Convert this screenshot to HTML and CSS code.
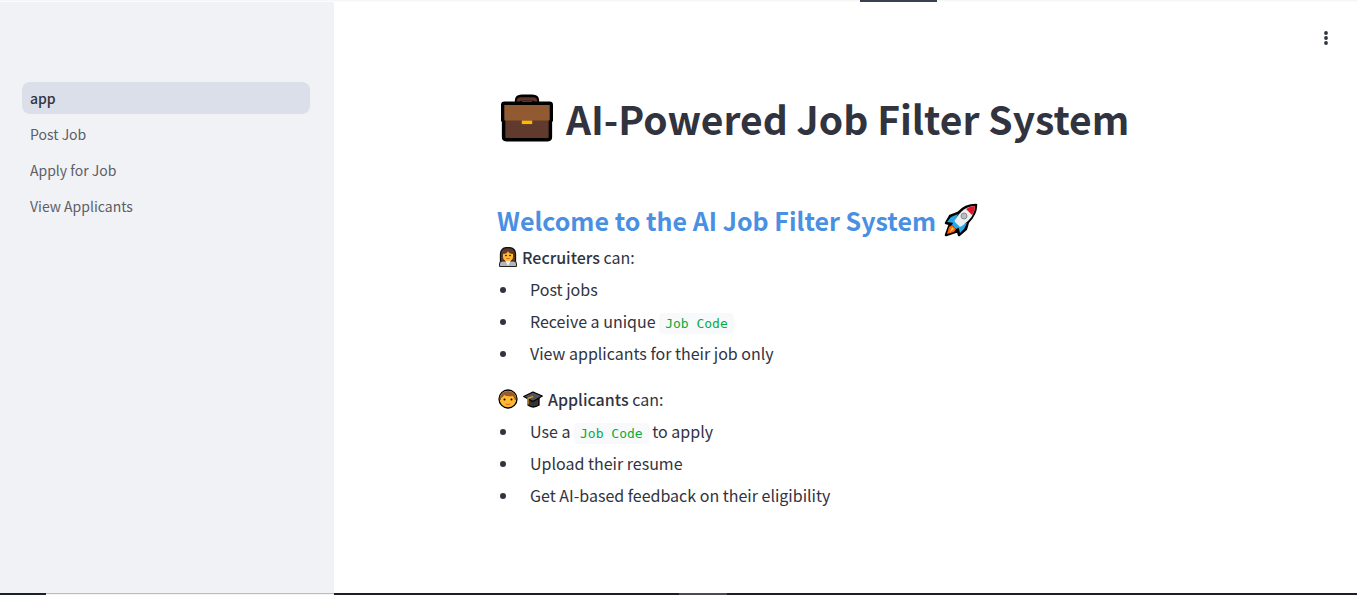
FILE: index.html
```html
<!DOCTYPE html>
<html lang="en">
<head>
<meta charset="utf-8">
<meta name="viewport" content="width=device-width, initial-scale=1">
<title>AI-Powered Job Filter System</title>
<link rel="stylesheet" href="styles.css">
</head>
<body>
<div class="page">
  <div class="strip strip-top"><span class="strip-tab"></span></div>
  <div class="layout">
    <nav class="sidebar" aria-label="Pages">
      <a class="nav-link active" href="#app" aria-current="page">app</a>
      <a class="nav-link" href="#post">Post Job</a>
      <a class="nav-link" href="#apply">Apply for Job</a>
      <a class="nav-link" href="#view">View Applicants</a>
    </nav>
    <main class="main">
      <button class="menu" type="button" aria-label="Main menu">
        <svg width="16" height="16" viewBox="0 0 16 16" fill="currentColor"><circle cx="8" cy="3" r="1.900"/><circle cx="8" cy="8" r="1.900"/><circle cx="8" cy="13" r="1.900"/></svg>
      </button>
      <div class="content">
        <h1 class="title">
          <svg class="emoji-title" viewBox="0 -2 60 60" aria-hidden="true">
            <path d="M20 14V8q0-3 4-3h12q4 0 4 3v6" fill="none" stroke="#000" stroke-width="8"/>
            <path d="M20 14V9q0-3 3-3h14q3 0 3 3v5" fill="none" stroke="#603629" stroke-width="4"/>
            <path d="M4 11h52q2 0 2 2v18h-1v19q0 3-3 3H6q-3 0-3-3V31H2V13q0-2 2-2z" fill="#603a2d" stroke="#000" stroke-width="4" stroke-linejoin="round"/>
            <path d="M4 13h52v18H4z" fill="#925a30"/>
            <path d="M24 31h12v4H24z" fill="#ffb900"/>
          </svg>
          <span>AI-Powered Job Filter System</span>
        </h1>
        <h2 class="subtitle">
          <span>Welcome to the AI Job Filter System</span>
          <svg class="emoji-sub" viewBox="0 0 34 34" aria-hidden="true">
            <path d="M32 2Q21 2 14 10L6 13 2 20l4 1-4 11 12-4 1 4 7-6 2-7Q32 11 32 2z" fill="#000" stroke="#000" stroke-width="2.5" stroke-linejoin="round"/>
            <path d="M14 11L7 14l-4 5 7 1zM23 20l-3 6-4 4-2-8z" fill="#28a8ea"/>
            <path d="M31 3Q19 3 11 17l-2 4 4 4 5-2Q31 14 31 3z" fill="#edf0f2"/>
            <path d="M31 3q-5 0-9 3l6 6q3-4 3-9z" fill="#e81224"/>
            <path d="M10 18l6 6-4 2-4-4z" fill="#28a8ea"/>
            <path d="M8 22l4 4-2 3-7 2 2-7z" fill="#f7630c"/>
            <path d="M8 24l2 2-4 3z" fill="#ffc83d"/>
            <circle cx="20" cy="13" r="3" fill="#b9bdc1" stroke="#868b90"/>
          </svg>
        </h2>
        <section>
          <p class="lead">
            <svg class="emoji" viewBox="0 0 20 20" aria-hidden="true">
              <path d="M2.500 17V7q0-6.500 7.500-6.500T17.500 7v10z" fill="#5f3a2e" stroke="#111" stroke-width="1.300"/>
              <path d="M1.500 19.500V17q0-3 3-3h11q3 0 3 3v2.500z" fill="#b4b4ba" stroke="#222" stroke-width="1"/>
              <path d="M7 13h6l-3 6z" fill="#eee"/>
              <path d="M5 7q4 0 5-3 1 3 5 3v3q0 4-5 4t-5-4z" fill="#ffb92e"/>
              <circle cx="8" cy="8.500" r=".8"/><circle cx="12" cy="8.500" r=".8"/>
              <path d="M8.500 11.500h3" stroke="#d85b28"/>
            </svg>
            <span><strong>Recruiters</strong> can:</span>
          </p>
          <ul class="list">
            <li>Post jobs</li>
            <li>Receive a unique <code>Job Code</code></li>
            <li>View applicants for their job only</li>
          </ul>
        </section>
        <section>
          <p class="lead lead-pair">
            <svg class="emoji" viewBox="0 0 20 20" aria-hidden="true">
              <circle cx="10" cy="10" r="9" fill="#ffb92e" stroke="#000" stroke-width="1.300"/>
              <path d="M2 11V8q2-6 8-6t8 6v3h-1l-2-4Q9 8 6 6 5 9 3 9v2z" fill="#965a32"/>
              <circle cx="6.500" cy="10.500" r="1"/><circle cx="13.500" cy="10.500" r="1"/>
              <path d="M7.500 15q2.500 1 5 0" fill="none" stroke="#e06b2c"/>
            </svg>
            <svg class="emoji" viewBox="0 0 20 20" aria-hidden="true">
              <path d="M5 9v7q5 4 11 0V9z" fill="#333" stroke="#000" stroke-width="1.300"/>
              <path d="M.7 7.500L10 3l9.300 4L10 12.500z" fill="#555" stroke="#000" stroke-width="1.300" stroke-linejoin="round"/>
              <path d="M10 7.500L5 9.500v6" fill="none" stroke="#e9a51e" stroke-width="1.300"/>
            </svg>
            <span><strong>Applicants</strong> can:</span>
          </p>
          <ul class="list">
            <li>Use a <code>Job Code</code> to apply</li>
            <li>Upload their resume</li>
            <li>Get AI-based feedback on their eligibility</li>
          </ul>
        </section>
      </div>
    </main>
  </div>
  <div class="strip strip-bottom"><span class="strip-start"></span><span class="strip-light"></span><span class="strip-rest"><span class="strip-thumb"></span></span></div>
</div>
</body>
</html>
```
FILE: styles.css
```css
* { box-sizing: border-box; }
body {
  margin: 0;
  background: #fff;
  color: #31333f;
  font-family: "Noto Sans CJK SC", "Noto Sans", sans-serif;
  font-size: 16px;
}
.page { display: flex; flex-direction: column; min-height: 100vh; }
.strip { display: flex; flex: none; height: 2px; }
.strip-top { justify-content: flex-end; background: linear-gradient(#f6f6f7 1px, #fcfcfd 1px); padding-right: 420px; }
.strip-tab { width: 77px; background: #384152; }
.strip-start { width: 46px; background: #1c1e28; }
.strip-light { width: 288px; background: linear-gradient(#bdbdbf 1px, #f4f4f4 1px); }
.strip-rest { flex: 1; display: flex; justify-content: center; padding-right: 285px; background: #1c1e28; }
.strip-thumb { width: 48px; background: #4a4c53; }
.layout { flex: 1; display: flex; }
.sidebar {
  flex: none;
  display: flex;
  flex-direction: column;
  gap: 4px;
  width: 334px;
  padding: 80px 24px 24px 22px;
  background: #f0f2f6;
}
.nav-link {
  padding: 0 8px;
  border-radius: 8px;
  color: #5c5e68;
  font-size: 14px;
  line-height: 32px;
  text-decoration: none;
}
.nav-link.active { background: #dbdfe9; color: #31333f; font-weight: 500; }
.main { position: relative; flex: 1; padding: 84px 16px 24px; }
.menu {
  position: absolute;
  top: 28px;
  right: 23px;
  display: flex;
  padding: 0;
  border: 0;
  background: none;
  color: #31333f;
}
.content { max-width: 697px; margin: 0 auto; }
.title {
  display: flex;
  align-items: center;
  gap: 9px;
  margin: 0 0 49px;
  font-size: 39px;
  line-height: 64px;
}
.emoji-title { flex: none; width: 60px; height: 52px; }
.subtitle {
  display: flex;
  align-items: center;
  gap: 8px;
  margin: 0;
  color: #4a90e2;
  font-size: 25px;
  line-height: 42px;
}
.emoji-sub { flex: none; width: 34px; height: 34px; }
.lead {
  display: flex;
  align-items: center;
  gap: 4px;
  margin: 0;
  padding-left: 1px;
  line-height: 32px;
}
.lead-pair { gap: 5px; }
.lead strong { font-weight: 500; }
.emoji { flex: none; width: 20px; height: 20px; }
.list { margin: 0; padding: 0 0 14px 3px; line-height: 32px; list-style: none; }
.list li::before {
  content: "";
  display: inline-block;
  width: 6px;
  height: 6px;
  margin-right: 24px;
  border-radius: 50%;
  background: #31333f;
  vertical-align: 3px;
}
code {
  padding: 3px 6px;
  border-radius: 4px;
  background: #f8f9fb;
  color: #09ab3b;
  font-family: "DejaVu Sans Mono", monospace;
  font-size: 13px;
  line-height: 20px;
}
```
